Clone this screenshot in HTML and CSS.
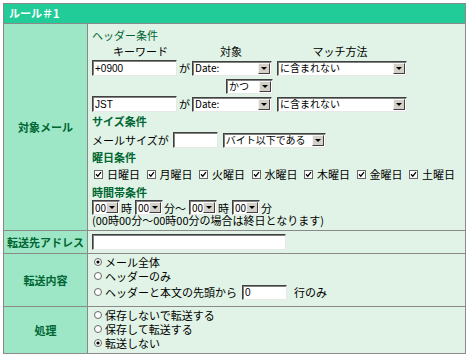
FILE: index.html
```html
<!DOCTYPE html>
<html lang="ja">
<head>
<meta charset="utf-8">
<title>ルール＃1</title>
<link rel="stylesheet" href="styles.css">
</head>
<body>
<table class="rule">
  <tr><th colspan="2" class="title">ルール＃1</th></tr>
  <tr>
    <th class="label">対象メール</th>
    <td class="content target">
      <div class="h h-thin">ヘッダー条件</div>
      <div class="cols"><span class="c1">キーワード</span><span class="c2">対象</span><span class="c3">マッチ方法</span></div>
      <div class="line">
        <input class="tx w-kw" value="+0900"><span class="ga">が</span>
        <span class="sel w-tg"><select><option>Date:</option></select><span class="btn"></span></span>
        <span class="sel w-mt"><select><option>に含まれない</option></select><span class="btn"></span></span>
      </div>
      <div class="line and">
        <span class="sel w-and"><select><option>かつ</option></select><span class="btn"></span></span>
      </div>
      <div class="line">
        <input class="tx w-kw" value="JST"><span class="ga">が</span>
        <span class="sel w-tg"><select><option>Date:</option></select><span class="btn"></span></span>
        <span class="sel w-mt"><select><option>に含まれない</option></select><span class="btn"></span></span>
      </div>
      <div class="h">サイズ条件</div>
      <div class="line size">
        <span class="txt">メールサイズが</span><input class="tx w-size" value="">
        <span class="sel w-unit"><select><option>バイト以下である</option></select><span class="btn"></span></span>
      </div>
      <div class="h">曜日条件</div>
      <div class="days">
        <label class="day"><svg class="cb" width="9" height="9" viewBox="0 0 9 9"><rect x="0.5" y="0.5" width="8" height="8" fill="#fff" stroke="#666"/><path d="M2 4.2 L3.8 6.2 L7 2.2" fill="none" stroke="#000" stroke-width="1.3"/></svg>日曜日</label>
        <label class="day"><svg class="cb" width="9" height="9" viewBox="0 0 9 9"><rect x="0.5" y="0.5" width="8" height="8" fill="#fff" stroke="#666"/><path d="M2 4.2 L3.8 6.2 L7 2.2" fill="none" stroke="#000" stroke-width="1.3"/></svg>月曜日</label>
        <label class="day"><svg class="cb" width="9" height="9" viewBox="0 0 9 9"><rect x="0.5" y="0.5" width="8" height="8" fill="#fff" stroke="#666"/><path d="M2 4.2 L3.8 6.2 L7 2.2" fill="none" stroke="#000" stroke-width="1.3"/></svg>火曜日</label>
        <label class="day"><svg class="cb" width="9" height="9" viewBox="0 0 9 9"><rect x="0.5" y="0.5" width="8" height="8" fill="#fff" stroke="#666"/><path d="M2 4.2 L3.8 6.2 L7 2.2" fill="none" stroke="#000" stroke-width="1.3"/></svg>水曜日</label>
        <label class="day"><svg class="cb" width="9" height="9" viewBox="0 0 9 9"><rect x="0.5" y="0.5" width="8" height="8" fill="#fff" stroke="#666"/><path d="M2 4.2 L3.8 6.2 L7 2.2" fill="none" stroke="#000" stroke-width="1.3"/></svg>木曜日</label>
        <label class="day"><svg class="cb" width="9" height="9" viewBox="0 0 9 9"><rect x="0.5" y="0.5" width="8" height="8" fill="#fff" stroke="#666"/><path d="M2 4.2 L3.8 6.2 L7 2.2" fill="none" stroke="#000" stroke-width="1.3"/></svg>金曜日</label>
        <label class="day"><svg class="cb" width="9" height="9" viewBox="0 0 9 9"><rect x="0.5" y="0.5" width="8" height="8" fill="#fff" stroke="#666"/><path d="M2 4.2 L3.8 6.2 L7 2.2" fill="none" stroke="#000" stroke-width="1.3"/></svg>土曜日</label>
      </div>
      <div class="h h-time">時間帯条件</div>
      <div class="line time">
        <span class="sel w-t"><select><option>00</option></select><span class="btn"></span></span><span class="txt">時</span>
        <span class="sel w-t"><select><option>00</option></select><span class="btn"></span></span><span class="txt">分～</span>
        <span class="sel w-t"><select><option>00</option></select><span class="btn"></span></span><span class="txt">時</span>
        <span class="sel w-t"><select><option>00</option></select><span class="btn"></span></span><span class="txt">分</span>
      </div>
      <div class="note">(00時00分～00時00分の場合は終日となります)</div>
    </td>
  </tr>
  <tr>
    <th class="label">転送先アドレス</th>
    <td class="content addr"><input class="tx w-addr" value=""></td>
  </tr>
  <tr>
    <th class="label">転送内容</th>
    <td class="content radios r1">
      <label class="rd"><svg class="ri" width="8" height="8" viewBox="0 0 8 8"><circle cx="4" cy="4" r="3.5" fill="#fff" stroke="#666"/><circle cx="4" cy="4" r="1.6" fill="#000"/></svg>メール全体</label>
      <label class="rd"><svg class="ri" width="8" height="8" viewBox="0 0 8 8"><circle cx="4" cy="4" r="3.5" fill="#fff" stroke="#666"/></svg>ヘッダーのみ</label>
      <label class="rd rd-tall"><svg class="ri" width="8" height="8" viewBox="0 0 8 8"><circle cx="4" cy="4" r="3.5" fill="#fff" stroke="#666"/></svg>ヘッダーと本文の先頭から<input class="tx w-lines" value="0">行のみ</label>
    </td>
  </tr>
  <tr>
    <th class="label">処理</th>
    <td class="content radios r2">
      <label class="rd"><svg class="ri" width="8" height="8" viewBox="0 0 8 8"><circle cx="4" cy="4" r="3.5" fill="#fff" stroke="#666"/></svg>保存しないで転送する</label>
      <label class="rd"><svg class="ri" width="8" height="8" viewBox="0 0 8 8"><circle cx="4" cy="4" r="3.5" fill="#fff" stroke="#666"/></svg>保存して転送する</label>
      <label class="rd"><svg class="ri" width="8" height="8" viewBox="0 0 8 8"><circle cx="4" cy="4" r="3.5" fill="#fff" stroke="#666"/><circle cx="4" cy="4" r="1.6" fill="#000"/></svg>転送しない</label>
    </td>
  </tr>
</table>
</body>
</html>
```

FILE: styles.css
```css
html, body {
  margin: 0;
  padding: 0;
  background: #fff;
}
body {
  padding: 3px;
  font-family: "Noto Sans CJK JP", "Liberation Sans", sans-serif;
  font-size: 11px;
  color: #000;
}
.rule {
  width: 463px;
  border-collapse: collapse;
  border: 1px solid #8a8a8a;
}
.rule th, .rule td {
  border: 1px solid #8a8a8a;
  padding: 0;
}
.title {
  background: #22cc99;
  color: #fff;
  text-align: left;
  font-weight: bold;
  font-size: 11px;
  height: 19px;
  padding: 0 0 0 5px !important;
  line-height: 19px;
}
.label {
  width: 83px;
  background: #9de6c6;
  color: #006633;
  font-weight: bold;
  font-size: 11px;
  text-align: center;
  vertical-align: middle;
}
.content {
  background: #e0f3e6;
  padding: 2px 3px 2px 4px !important;
  vertical-align: top;
  line-height: 14px;
}
.h {
  color: #006633;
  font-weight: bold;
  line-height: 16px;
}
.h-thin {
  font-weight: normal;
  margin-top: 1px;
}
.h-time { margin-top: 1px; }
.cols {
  display: flex;
  line-height: 16px;
}
.cols .c1 { width: 97px; text-align: center; }
.cols .c2 { width: 84px; text-align: center; }
.cols .c3 { width: 134px; text-align: center; }
.line {
  display: flex;
  align-items: center;
  height: 18px;
}
.line.and {
  padding-left: 134px;
}
.line.size { margin-top: 2px; }
.tx {
  box-sizing: border-box;
  height: 16px;
  border: 1px solid;
  border-color: #404040 #e8e8e8 #e8e8e8 #404040;
  box-shadow: inset 1px 1px 0 #808080;
  background: #fff;
  font-family: "Liberation Sans", sans-serif;
  font-size: 10px;
  padding: 0 2px;
  margin: 0;
  outline: none;
}
.w-kw { width: 85px; }
.w-size { width: 45px; margin-left: 4px; }
.w-addr { width: 194px; }
.w-lines { width: 45px; height: 15px; margin: 0 4px 0 2px; flex: none; }
.ga {
  width: 15px;
  text-align: center;
  flex: none;
}
.txt { flex: none; }
.sel {
  box-sizing: border-box;
  display: inline-flex;
  align-items: center;
  height: 15px;
  border: 1px solid;
  border-color: #404040 #e8e8e8 #e8e8e8 #404040;
  box-shadow: inset 1px 1px 0 #808080;
  background: #fff;
  padding: 1px;
  flex: none;
}
.sel select {
  appearance: none;
  -webkit-appearance: none;
  border: 0;
  background: transparent;
  flex: 1;
  min-width: 0;
  height: 12px;
  padding: 0 0 0 1px;
  margin: 0;
  font-family: "Noto Sans CJK JP", "Liberation Sans", sans-serif;
  font-size: 10px;
  line-height: 12px;
  color: #000;
  outline: none;
}
.btn {
  box-sizing: border-box;
  width: 12px;
  height: 11px;
  flex: none;
  background: #d4d0c8;
  border: 1px solid;
  border-color: #f4f4f4 #404040 #404040 #f4f4f4;
  display: flex;
  align-items: center;
  justify-content: center;
}
.btn::before {
  content: "";
  border-left: 3px solid transparent;
  border-right: 3px solid transparent;
  border-top: 3px solid #000;
}
.w-tg { width: 80px; }
.w-mt { width: 130px; margin-left: 5px; }
.w-and { width: 47px; }
.w-unit { width: 103px; margin-left: 5px; }
.w-t { width: 28px; margin-right: 1px; }
.time .txt { margin-right: 3px; }
.days {
  display: flex;
  height: 18px;
  align-items: center;
  gap: 6.5px;
  padding-left: 2px;
}
.day {
  display: inline-flex;
  align-items: center;
  gap: 4px;
}
.time { height: 15px; }
.note { line-height: 12px; font-size: 11px; margin-top: -1px; }
.target { padding-bottom: 4px !important; }
.addr { padding: 3px 4px 3px !important; height: 16px; }
.addr .tx { display: block; }
.radios { padding-left: 6px !important; }
.r1 { padding-top: 1px !important; padding-bottom: 5px !important; }
.r2 { padding-top: 1px !important; padding-bottom: 3px !important; }
.rd {
  display: flex;
  align-items: center;
  gap: 3px;
  height: 14px;
  white-space: nowrap;
}
.rd-tall { height: 18px; }
.ri, .cb { flex: none; }
```
